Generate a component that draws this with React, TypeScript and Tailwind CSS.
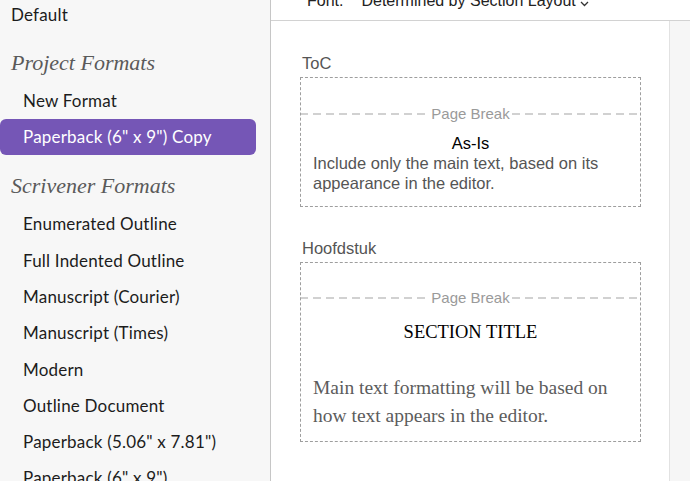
import React from "react";

const sans = "font-['Lato','Noto_Sans',sans-serif]";
const hel = "font-['Liberation_Sans','Arial',sans-serif]";
const serif = "font-['Liberation_Serif','Times_New_Roman',serif]";

function Dash() {
  return (
    <svg className="flex-1 h-[2px]" preserveAspectRatio="none">
      <line x1="0" y1="1" x2="100%" y2="1" stroke="#a3a3a3" strokeWidth="1" strokeDasharray="8 5" />
    </svg>
  );
}

function PageBreak() {
  return (
    <div className="-mx-px flex items-center h-[18px]">
      <Dash />
      <span className={`${hel} text-[15px] leading-[18px] text-[#9a9a9a] px-[2px]`}>Page Break</span>
      <Dash />
    </div>
  );
}

const items = [
  "Enumerated Outline",
  "Full Indented Outline",
  "Manuscript (Courier)",
  "Manuscript (Times)",
  "Modern",
  "Outline Document",
  'Paperback (5.06" x 7.81")',
  'Paperback (6" x 9")',
];

export default function App() {
  return (
    <div className="w-[690px] h-[481px] flex overflow-hidden bg-white">
      <div className={`w-[271px] shrink-0 bg-[#f7f7f7] border-r border-[#c6c6c6] ${sans} text-[17px] tracking-[0.2px] text-[#1c1c1c]`}>
        <div className="-mt-[3px] h-9 flex items-center pl-[11px]">Default</div>
        <div className={`mt-[11px] h-9 flex items-center pl-[11px] ${serif} italic text-[22px] tracking-normal text-[#5a5a5a]`}>Project Formats</div>
        <div className="mt-[3px] h-9 flex items-center pl-[23px]">New Format</div>
        <div className="h-9 flex items-center pl-[23px] mr-[14px] rounded-md bg-[#7556b6] text-white">Paperback (6" x 9") Copy</div>
        <div className={`mt-[12px] h-9 flex items-center pl-[11px] ${serif} italic text-[22px] tracking-normal text-[#5a5a5a]`}>Scrivener Formats</div>
        <div className="mt-[3px]">
          {items.map((t) => (
            <div key={t} className="h-[36.3px] flex items-center pl-[23px]">{t}</div>
          ))}
        </div>
      </div>
      <div className="flex-1 flex flex-col min-w-0">
        <div className="h-[21px] shrink-0 border-b border-[#d2d2d2] bg-white overflow-hidden">
          <div className={`-mt-[9px] flex items-center pl-[36px] ${hel} text-[16px] leading-[20px] text-[#222]`}>
            <span>Font:</span>
            <span className="ml-[18px]">Determined by Section Layout</span>
            <svg width="9" height="6" viewBox="0 0 9 6" className="ml-[4px] mt-[6px]">
              <path d="M1 1l3.5 3.5L8 1" fill="none" stroke="#333" strokeWidth="1.3" />
            </svg>
          </div>
        </div>
        <div className="flex-1 flex min-h-0">
          <div className="flex-1 bg-white pl-[29px] pt-[32px]">
            <div className={`${hel} text-[16.5px] leading-[20px] text-[#555] pl-[2px]`}>ToC</div>
            <div className="mt-1 w-[341px] border border-dashed border-[#9e9e9e]">
              <div className="h-[27px]" />
              <PageBreak />
              <div className={`${hel} mt-[10px] text-center text-[16.5px] leading-[20px] text-black`}>As-Is</div>
              <div className={`${hel} pl-[12px] pr-2 pb-[13px] text-[16.5px] leading-[20px] text-[#555]`}>
                Include only the main text, based on its appearance in the editor.
              </div>
            </div>
            <div className={`mt-[31px] ${hel} text-[16.5px] leading-[20px] text-[#555] pl-[2px]`}>Hoofdstuk</div>
            <div className="mt-[4px] w-[341px] border border-dashed border-[#9e9e9e]">
              <div className="h-[26px]" />
              <PageBreak />
              <div className={`${serif} mt-[13px] text-center text-[18.5px] leading-[24px] text-black`}>SECTION TITLE</div>
              <div className={`${serif} mt-[30px] pl-[12px] pr-[14px] pb-[11px] text-[19.5px] leading-[28px] text-[#5c5c5c]`}>
                Main text formatting will be based on how text appears in the editor.
              </div>
            </div>
          </div>
          <div className="w-[21px] shrink-0 bg-[#f6f6f6] border-l border-[#e2e2e2]" />
        </div>
      </div>
    </div>
  );
}
